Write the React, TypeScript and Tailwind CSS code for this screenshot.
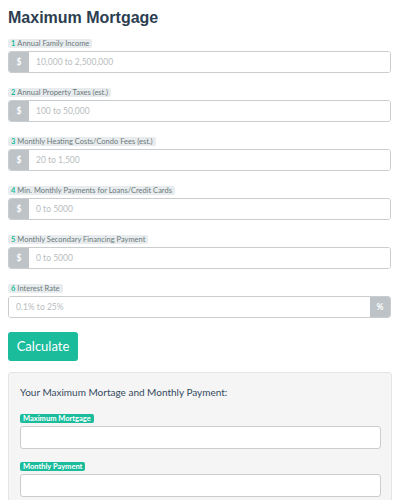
import React from 'react';

type Field = { n: number; label: string; placeholder: string; addon: '$' | '%' };

const fields: Field[] = [
  { n: 1, label: 'Annual Family Income', placeholder: '10,000 to 2,500,000', addon: '$' },
  { n: 2, label: 'Annual Property Taxes (est.)', placeholder: '100 to 50,000', addon: '$' },
  { n: 3, label: 'Monthly Heating Costs/Condo Fees (est.)', placeholder: '20 to 1,500', addon: '$' },
  { n: 4, label: 'Min. Monthly Payments for Loans/Credit Cards', placeholder: '0 to 5000', addon: '$' },
  { n: 5, label: 'Monthly Secondary Financing Payment', placeholder: '0 to 5000', addon: '$' },
  { n: 6, label: 'Interest Rate', placeholder: '0.1% to 25%', addon: '%' },
];

const lato = { fontFamily: 'Lato, "Open Sans", sans-serif' };

export default function App() {
  return (
    <div className="w-[400px] h-[500px] overflow-hidden bg-white px-2 font-['Lato',sans-serif]">
      <h1 className="pt-[8px] text-[16px] leading-[20px] font-bold text-[#2c3e50] font-['Liberation_Sans',Arial,sans-serif]">
        Maximum Mortgage
      </h1>

      <div className="mt-[11px] flex flex-col gap-[15px]">
        {fields.map((f) => (
          <div key={f.n} className="flex flex-col gap-[3px]">
            <div className="self-start h-[9px] flex items-center rounded-[2px] bg-[#e8ecee] px-[3px] text-[7.5px] leading-none text-[#6c7a7b]">
              <span className="font-bold text-[#1abc9c] mr-[2px]">{f.n}</span>
              {f.label}
            </div>
            <div className="flex h-[22px] w-[383px] rounded-[3px] border border-[#c9cdd0] overflow-hidden">
              {f.addon === '$' && (
                <div className="w-[20px] shrink-0 bg-[#bdc3c7] text-white text-[8.5px] font-bold flex items-center justify-center">
                  $
                </div>
              )}
              <input
                className="flex-1 min-w-0 bg-white px-[7px] text-[8.5px] text-[#34495e] outline-none placeholder:text-[#b8bdc0]"
                placeholder={f.placeholder}
                style={lato}
              />
              {f.addon === '%' && (
                <div className="w-[20px] shrink-0 bg-[#bdc3c7] text-white text-[8.5px] font-bold flex items-center justify-center">
                  %
                </div>
              )}
            </div>
          </div>
        ))}
      </div>

      <button className="mt-[14px] h-[29px] w-[70px] rounded-[3px] bg-[#1abc9c] text-white text-[13px] leading-none">
        Calculate
      </button>

      <div className="mt-[11px] w-[384px] rounded-[3px] border border-[#e5e5e5] bg-[#f5f5f5] px-[11px] pt-[12px] pb-[12px]">
        <p className="text-[10px] leading-[14px] text-[#34495e]">Your Maximum Mortage and Monthly Payment:</p>
        <div className="mt-[15px] flex flex-col gap-[13px]">
          {['Maximum Mortgage', 'Monthly Payment'].map((t) => (
            <div key={t} className="flex flex-col gap-[3px]">
              <span className="self-start h-[9px] flex items-center rounded-[2px] bg-[#1abc9c] px-[3px] text-[7.5px] font-bold leading-none text-white">
                {t}
              </span>
              <div className="h-[23px] w-[361px] rounded-[3px] border border-[#c9cdd0] bg-white" />
            </div>
          ))}
        </div>
      </div>
    </div>
  );
}
